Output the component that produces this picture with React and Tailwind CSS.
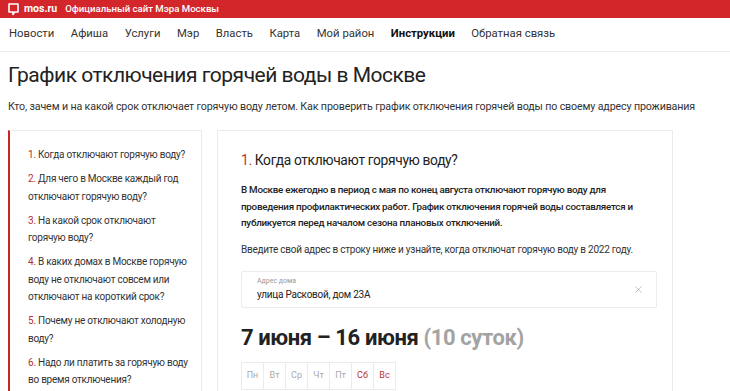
import { X } from 'lucide-react';

const navItems = ['Новости', 'Афиша', 'Услуги', 'Мэр', 'Власть', 'Карта', 'Мой район', 'Инструкции', 'Обратная связь'];

const questions = [
    'Когда отключают горячую воду?',
    'Для чего в Москве каждый год отключают горячую воду?',
    'На какой срок отключают горячую воду?',
    'В каких домах в Москве горячую воду не отключают совсем или отключают на короткий срок?',
    'Почему не отключают холодную воду?',
    'Надо ли платить за горячую воду во время отключения?',
];

const days = ['Пн', 'Вт', 'Ср', 'Чт', 'Пт', 'Сб', 'Вс'];

const App = () => {
    return (
        <div className="w-[730px] h-[391px] overflow-hidden bg-white text-[#222] font-['Roboto',sans-serif]">
            {/* Top red bar */}
            <div className="h-[18px] bg-[#d2262b] flex items-center pl-[8px] text-white">
                <svg width="11" height="13" viewBox="0 0 11 13" className="mr-[5px]">
                    <path d="M1 1h9v8H6.5L5 11.5V9H1z" fill="none" stroke="white" strokeWidth="1.6" strokeLinejoin="round" />
                </svg>
                <span className="font-bold text-[10.5px] leading-none mr-[8px]">mos.ru</span>
                <span className="font-medium text-[9.6px] leading-none">Официальный сайт Мэра Москвы</span>
            </div>

            {/* Nav */}
            <div className="h-[34px] flex items-center pl-[9px] gap-[16.5px] border-b border-[#ececec] text-[11.3px] text-[#333]">
                {navItems.map(item => (
                    <span key={item} className={item === 'Инструкции' ? 'font-bold text-[#111]' : ''}>{item}</span>
                ))}
            </div>

            {/* Title */}
            <h1 className="pl-[8px] pt-[8px] text-[21px] leading-[30px] tracking-[-0.5px] text-[#222]">
                График отключения горячей воды в Москве
            </h1>
            <p className="pl-[8px] mt-[9px] text-[10.7px] leading-[16px] tracking-[-0.15px] text-[#333] whitespace-nowrap">
                Кто, зачем и на какой срок отключает горячую воду летом. Как проверить график отключения горячей воды по своему адресу проживания
            </p>

            <div className="flex gap-[15px] pl-[8px] mt-[15px]">
                {/* Sidebar */}
                <div className="w-[194px] h-[300px] border border-[#ebebeb] border-l-[2px] border-l-[#c8252b] pl-[18px] pr-[12px] pt-[15px] flex flex-col gap-[7px]">
                    {questions.map((q, i) => (
                        <p key={i} className="text-[10px] leading-[17.3px] tracking-[-0.25px] text-[#333]">
                            <span className="text-[#b5312f]">{i + 1}.</span> {q}
                        </p>
                    ))}
                </div>

                {/* Main card */}
                <div className="w-[456px] h-[300px] border border-[#ebebeb] pl-[23px] pr-[14px] pt-[19px]">
                    <h2 className="text-[13.8px] leading-[20px] tracking-[-0.35px] text-[#222]">
                        <span className="text-[#b5312f]">1.</span> Когда отключают горячую воду?
                    </h2>
                    <p className="mt-[12px] text-[9.8px] leading-[16.5px] tracking-[-0.25px] font-medium text-[#222]">
                        В Москве ежегодно в период с мая по конец августа отключают горячую воду для проведения профилактических работ. График отключения горячей воды составляется и публикуется перед началом сезона плановых отключений.
                    </p>
                    <p className="mt-[10px] text-[10px] leading-[16px] tracking-[-0.25px] text-[#333]">
                        Введите свой адрес в строку ниже и узнайте, когда отключат горячую воду в 2022 году.
                    </p>

                    <div className="mt-[13px] w-[416px] h-[37px] border border-[#ececec] rounded-[2px] flex items-center pl-[15px] pr-[12px]">
                        <div className="flex-1 flex flex-col">
                            <span className="text-[7px] leading-[10px] text-[#999]">Адрес дома</span>
                            <span className="text-[10px] leading-[15px] tracking-[-0.25px] text-[#222] mt-[1px]">улица Расковой, дом 23А</span>
                        </div>
                        <X size={11} strokeWidth={1.3} className="text-[#999]" />
                    </div>

                    <div className="mt-[15px] text-[22px] leading-[30px] tracking-[-0.4px] font-bold text-[#222]">
                        7 июня – 16 июня <span className="text-[#a3a3a3]">(10 суток)</span>
                    </div>

                    <div className="mt-[9px] flex">
                        {days.map((d, i) => (
                            <div
                                key={d}
                                className={`w-[23px] h-[28px] border border-[#ececec] -ml-px first:ml-0 flex items-center justify-center text-[9px] ${i >= 5 ? 'text-[#b5312f]' : 'text-[#aaa]'}`}
                            >
                                {d}
                            </div>
                        ))}
                    </div>
                </div>
            </div>
        </div>
    );
};

export default App;
